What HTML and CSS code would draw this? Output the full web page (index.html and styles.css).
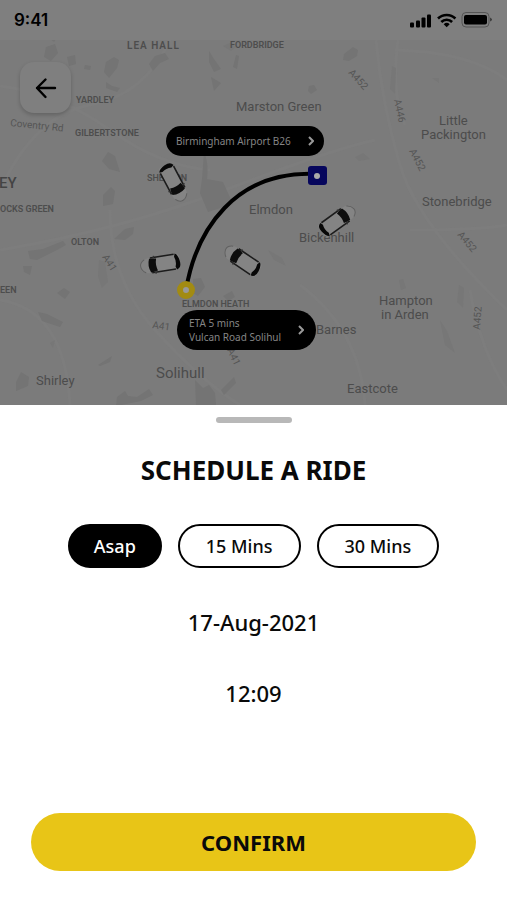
FILE: index.html
```html
<!DOCTYPE html>
<html lang="en">
<head>
    <meta charset="UTF-8">
    <meta name="viewport" content="width=device-width, initial-scale=1.0">
    <title>Schedule a Ride</title>
    <link rel="stylesheet" href="styles.css">
</head>
<body>
    <div class="screen">
        <div class="top">
            <header class="status-bar">
                <span class="clock">9:41</span>
                <svg class="status-icons" width="84" height="18" viewBox="0 0 84 18" aria-hidden="true">
                    <!-- signal -->
                    <rect x="1" y="11.500" width="4" height="5" rx="1"/>
                    <rect x="7" y="9.500" width="4" height="7" rx="1"/>
                    <rect x="12.500" y="6.500" width="4" height="10" rx="1"/>
                    <rect x="18" y="3.500" width="4" height="13" rx="1"/>
                    <!-- wifi -->
                    <g fill="none" stroke="#000" stroke-width="2.600">
                        <path d="M29 7.500a12.500 12.500 0 0 1 17.400 0"/>
                        <path d="M32.300 11a7.600 7.600 0 0 1 10.800 0"/>
                    </g>
                    <path d="M34.700 13.200a4.300 4.300 0 0 1 6 0l-3 3z"/>
                    <!-- battery -->
                    <rect x="53" y="1.500" width="27" height="14.500" rx="4" fill="none" stroke="#555"/>
                    <rect x="55" y="4" width="23" height="9.500" rx="2"/>
                    <path d="M81.500 6.500a2.500 2.500 0 0 1 0 4z"/>
                </svg>
            </header>

            <main class="map">
                <svg class="map-canvas" viewBox="0 0 507 365" preserveAspectRatio="xMidYMid slice" aria-hidden="true">
                    <defs>
                        <g id="car">
                            <path d="M-18-7.500Q-20-8-20-4V4Q-20 8-16 8L12 7.500Q20 6 20 0T12-7.500L-14-8z" fill="#848484"/>
                            <path d="M15-6.500Q19-4 19.500 0T15 6.500" fill="none" stroke="#606060" stroke-width="1"/>
                            <path d="M-15-7.500L9-7.500M-15 7.500L9 7.500" stroke="#1c1c1c" stroke-width="1.600"/>
                            <path d="M-16-8Q-21-7-20 0T-16 8L-15 5Q-17 0-15-5z" fill="#080808"/>
                            <path d="M3-6Q7-7 10-7Q13 0 10 7Q7 7 3 6Q5 0 3-6z" fill="#0d0d0d"/>
                            <path d="M5-9l1 2M5 9l1-2" stroke="#333" stroke-width="1.400"/>
                        </g>
                    </defs>

                    <!-- roads -->
                    <g class="road">
                        <path d="M0 150Q35 75 90 65T170 0M0 46Q60 54 110 90T210 130"/>
                        <path d="M376 0Q382 65 400 125T507 270M398 0Q391 55 405 85"/>
                        <path d="M395 10Q470 12 507 40M0 260Q65 270 70 365"/>
                        <path d="M110 170Q110 240 155 290T240 365M365 365Q360 290 300 245"/>
                        <path d="M410 190Q480 190 507 185M0 210Q120 190 225 150T375 100M470 250Q480 310 507 350"/>
                    </g>

                    <!-- parks -->
                    <g class="park">
                        <path d="M46 7l9-3 3 9-7 8-7-4zM48-3h9l-3 5zM67 17l8-2 1 9-7 2zM85 25l6 1-1 4-6-1zM106 22l8-5 5 3-2 8-8 10-5-6z"/>
                        <path d="M149 24l6-8 10-3 4 6-9 4-7 8zM106 42l6 4 8 2-3 4-11-4zM209 11l5 8 7 10-7 3-5-10zM211 37l10 6-7 8zM236 15l3 1-2 13-4-2z"/>
                        <path d="M344 14l9-7 5 3-1 6-8 5-6-1zM309 46l5-1 3 5-6 4-3-3z"/>
                        <path d="M102 121l6-9 7 4 5 16-11-3zM103 155l8-8 4 4-2 13-10 2zM114 199l11-10 9-2-1 7-8 6z"/>
                        <path d="M28 211l15-2 20-8 3 4-9 5-20 10-7-1zM23 226h9l-2 9-6-3zM204 112q5 11 3 27l16 3 10 22-25 8-8-19 2-14z"/>
                        <path d="M38 272l9 2 16 8-3 5-18-6zM57 253l7-5 6 4-5 7zM98 325l14-9-2 6-10 4z"/>
                        <path d="M16 342l5-10 8 5-1 9-12 5zM117 357l8-6 3 5 9 1 12-8 4 6-12 6-25 5zM195 340l8 8 6-3 6 8 1 12h-20z"/>
                        <path d="M221 350l13-13 2 6-12 12zM193 239l8-1 4 9-7 9-5-3zM223 256l9-5 3 6-7 4z"/>
                    </g>
                    <g class="park park-faint">
                        <path d="M392 26l4 2-1 26-5-5zM432 38h7v5zM223 6l7-3 6 4-5 4zM99 220l6 2 3 20-6 6-4-12zM355 117l8-4 7 6-11 2z"/>
                        <path d="M268 210l14 8 4 8-12-6zM399 240l4-1 3 9-5 2zM440 280l7 11 8 22-10-8zM459 245l5 3-1 20-6-6zM50 303l5-3-2 8z"/>
                    </g>

                    <g class="label-small">
                        <text x="127" y="9" class="label-wide">LEA HALL</text>
                        <text x="230" y="8">FORDBRIDGE</text>
                        <text x="76" y="63">YARDLEY</text>
                        <text x="75" y="96">GILBERTSTONE</text>
                        <text x="147" y="141">SHELDON</text>
                        <text x="0" y="172">OCKS GREEN</text>
                        <text x="71" y="205">OLTON</text>
                        <text x="0" y="253">EEN</text>
                        <text x="182" y="267">ELMDON HEATH</text>
                    </g>
                    <g class="label-road">
                        <text x="10" y="86" transform="rotate(6 10 86)">Coventry Rd</text>
                        <text x="348" y="33" transform="rotate(48 348 33)">A452</text>
                        <text x="394" y="60" transform="rotate(78 394 60)">A446</text>
                        <text x="409" y="111" transform="rotate(62 409 111)">A452</text>
                        <text x="457" y="195" transform="rotate(50 457 195)">A452</text>
                        <text x="480" y="290" transform="rotate(-86 480 290)">A452</text>
                        <text x="102" y="217" transform="rotate(58 102 217)">A41</text>
                        <text x="152" y="288" transform="rotate(8 152 288)">A41</text>
                        <text x="227" y="310" transform="rotate(65 227 310)">A41</text>
                    </g>
                    <g class="label-town">
                        <text x="236" y="71">Marston Green</text>
                        <text x="439" y="85">Little</text>
                        <text x="421" y="99">Packington</text>
                        <text x="422" y="166">Stonebridge</text>
                        <text x="249" y="174">Elmdon</text>
                        <text x="299" y="202">Bickenhill</text>
                        <text x="379" y="265">Hampton</text>
                        <text x="381" y="279">in Arden</text>
                        <text x="316" y="294">Barnes</text>
                        <text x="36" y="345">Shirley</text>
                        <text x="347" y="353">Eastcote</text>
                        <text x="156" y="338" class="label-large">Solihull</text>
                        <text x="-1" y="148" class="label-large label-dark">EY</text>
                    </g>

                    <use href="#car" transform="translate(174 143) rotate(62)"/>
                    <use href="#car" transform="translate(338 180) rotate(-36)"/>
                    <use href="#car" transform="translate(160 224) rotate(171)"/>
                    <use href="#car" transform="translate(242 220) rotate(214)"/>

                    <!-- route -->
                    <path d="M186 250C196 190 235 130 317 134" fill="none" stroke="#000" stroke-width="4"/>
                    <circle cx="186" cy="250" r="6" fill="#999" stroke="#a28b12" stroke-width="6"/>
                    <rect x="308" y="126" width="19" height="19" rx="3" fill="#06065c"/>
                    <circle cx="317" cy="136" r="3" fill="#aaa"/>
                </svg>

                <button class="back" aria-label="Back">
                    <svg width="22" height="22" viewBox="0 0 22 22" fill="none" stroke="#000" stroke-width="2.400" stroke-linecap="round" stroke-linejoin="round">
                        <path d="M20 11H2M10.500 2.500L2 11l8.500 9"/>
                    </svg>
                </button>
                <button class="place place-to">
                    <span>Birmingham Airport B26</span>
                    <svg width="6" height="10" viewBox="0 0 6 10"><path d="M1 1l4 4-4 4"/></svg>
                </button>
                <button class="place place-from">
                    <span>ETA 5 mins<br>Vulcan Road Solihul</span>
                    <svg width="6" height="10" viewBox="0 0 6 10"><path d="M1 1l4 4-4 4"/></svg>
                </button>
            </main>
        </div>

        <section class="sheet">
            <div class="handle"></div>
            <h1>SCHEDULE A RIDE</h1>
            <div class="options">
                <button class="option selected">Asap</button>
                <button class="option">15 Mins</button>
                <button class="option">30 Mins</button>
            </div>
            <input class="when" type="text" aria-label="Date" value="17-Aug-2021">
            <input class="when" type="text" aria-label="Time" value="12:09">
            <button class="confirm">CONFIRM</button>
        </section>
    </div>
</body>
</html>
```

FILE: styles.css
```css
* {
    box-sizing: border-box;
}

body {
    margin: 0;
    background-color: #fff;
    font-family: "Noto Sans", "Open Sans", sans-serif;
    color: #0a0a0a;
}

button {
    border: none;
    padding: 0;
    font-family: inherit;
    cursor: pointer;
}

.screen {
    display: flex;
    flex-direction: column;
    min-height: 100vh;
}

/* Dimmed map */
.top {
    display: flex;
    flex-direction: column;
    height: 45vh;
    min-height: 360px;
    background-color: #7b7b7b;
}

.status-bar {
    display: flex;
    justify-content: space-between;
    align-items: center;
    height: 40px;
    padding: 0 14px;
    background-color: #7f7f7f;
}

.clock {
    font-family: Inter, sans-serif;
    font-size: 17px;
    font-weight: 600;
    color: #000;
}

.map {
    position: relative;
    flex: 1;
    overflow: hidden;
}

.map-canvas {
    position: absolute;
    width: 100%;
    height: 100%;
    font-family: Roboto, sans-serif;
}

.road {
    fill: none;
    stroke: #7d7d7d;
    stroke-width: 3;
}

.park {
    fill: #747474;
}

.park-faint {
    fill: #777;
}

.label-small {
    font-size: 9px;
    font-weight: 600;
    fill: #4d4d4d;
}

.label-wide {
    font-size: 10px;
    letter-spacing: 1px;
}

.label-road {
    font-size: 10px;
    fill: #555;
}

.label-town {
    font-size: 13px;
    fill: #4c4c4c;
}

.label-large {
    font-size: 15px;
}

.label-dark {
    font-weight: 500;
    fill: #444;
}

.back {
    position: absolute;
    top: 22px;
    left: 20px;
    display: flex;
    justify-content: center;
    align-items: center;
    width: 51px;
    height: 51px;
    border-radius: 14px;
    background-color: #7f7f7f;
    box-shadow: 0 2px 4px rgba(0, 0, 0, 0.2);
}

.place {
    position: absolute;
    display: flex;
    align-items: center;
    justify-content: space-between;
    border-radius: 20px;
    background-color: #000;
    color: #858585;
    font-size: 10px;
    line-height: 14px;
    text-align: left;
}

.place svg {
    fill: none;
    stroke: #999;
    stroke-width: 2;
}

.place-to {
    top: 86px;
    left: 166px;
    width: 158px;
    height: 30px;
    padding: 0 10px;
}

.place-from {
    top: 270px;
    left: 177px;
    width: 139px;
    height: 40px;
    padding: 0 12px;
}

/* Bottom sheet */
.sheet {
    display: flex;
    flex: 1;
    flex-direction: column;
    align-items: center;
    padding: 12px 31px 29px;
}

.handle {
    width: 76px;
    height: 6px;
    border-radius: 3px;
    background-color: #b8b8b8;
}

h1 {
    margin: 28px 0 35px;
    font-size: 26px;
    font-weight: 700;
    line-height: 38px;
}

.options {
    display: flex;
    justify-content: center;
    gap: 16px;
    margin-bottom: 36px;
}

.option {
    height: 44px;
    padding: 0 26px;
    border: 2px solid #000;
    border-radius: 22px;
    background-color: #fff;
    color: #0a0a0a;
    font-size: 18px;
    font-weight: 500;
}

.option.selected {
    padding: 0 24px;
    background-color: #000;
    color: #fff;
}

.when {
    width: 100%;
    height: 36px;
    margin-bottom: 35px;
    padding: 0;
    border: none;
    background: none;
    color: #0a0a0a;
    font-family: inherit;
    font-size: 22px;
    font-weight: 500;
    text-align: center;
}

.confirm {
    width: 100%;
    height: 58px;
    margin-top: auto;
    border-radius: 29px;
    background-color: #e8c517;
    color: #0a0a0a;
    font-size: 22px;
    font-weight: 700;
}
```
